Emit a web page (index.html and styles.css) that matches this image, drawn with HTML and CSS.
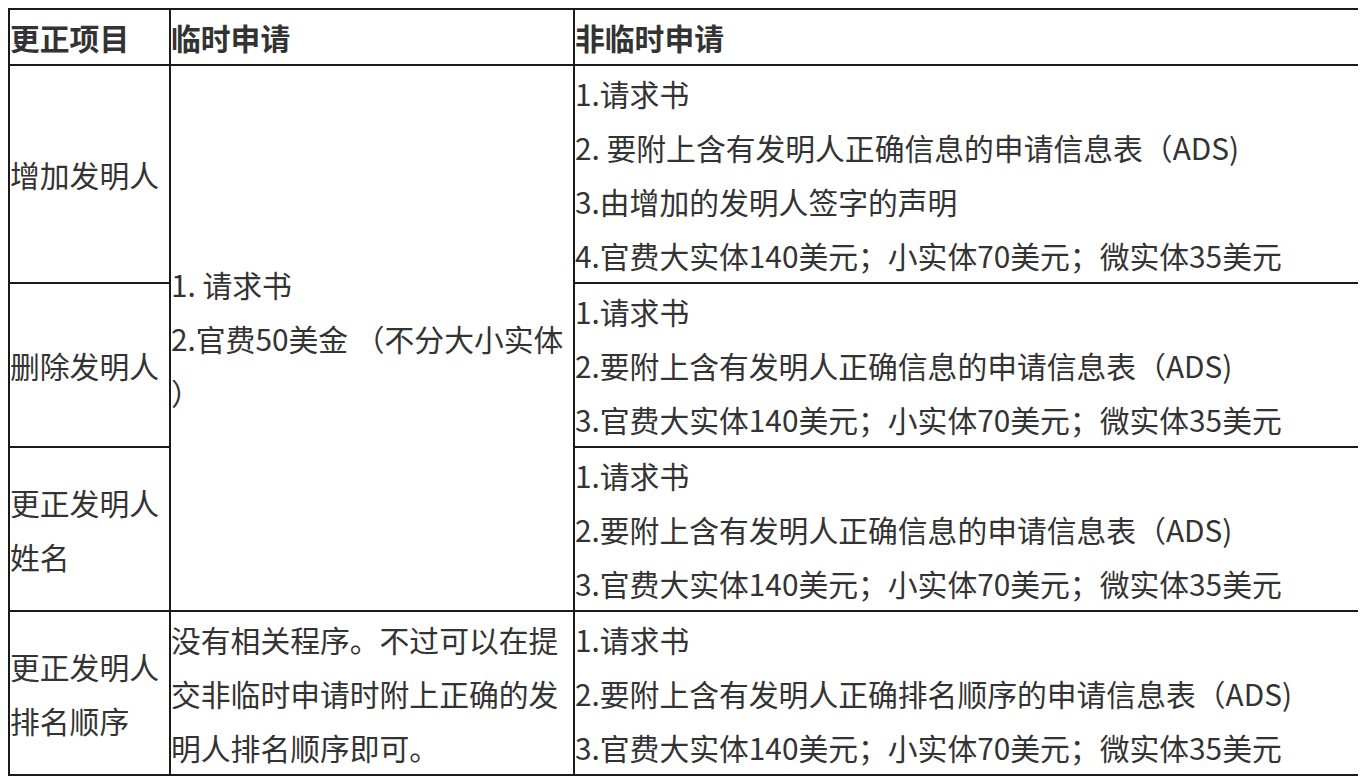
FILE: index.html
```html
<!DOCTYPE html>
<html lang="zh-CN">
<head>
<meta charset="utf-8">
<title>更正发明人</title>
<link rel="stylesheet" href="styles.css">
</head>
<body>
<table class="grid">
  <colgroup>
    <col class="c1">
    <col class="c2">
    <col class="c3">
  </colgroup>
  <tr>
    <th>更正项目</th>
    <th>临时申请</th>
    <th>非临时申请</th>
  </tr>
  <tr>
    <td>增加发明人</td>
    <td rowspan="3" class="loose"><p>1. 请求书</p><p>2.官费50美金 （不分大小实体）</p></td>
    <td><p>1.请求书</p><p>2. 要附上含有发明人正确信息的申请信息表（ADS)</p><p>3.由增加的发明人签字的声明</p><p>4.官费大实体140美元；小实体70美元；微实体35美元</p></td>
  </tr>
  <tr>
    <td>删除发明人</td>
    <td><p>1.请求书</p><p>2.要附上含有发明人正确信息的申请信息表（ADS)</p><p>3.官费大实体140美元；小实体70美元；微实体35美元</p></td>
  </tr>
  <tr>
    <td>更正发明人姓名</td>
    <td><p>1.请求书</p><p>2.要附上含有发明人正确信息的申请信息表（ADS)</p><p>3.官费大实体140美元；小实体70美元；微实体35美元</p></td>
  </tr>
  <tr>
    <td>更正发明人排名顺序</td>
    <td>没有相关程序。不过可以在提交非临时申请时附上正确的发明人排名顺序即可。</td>
    <td><p>1.请求书</p><p>2.要附上含有发明人正确排名顺序的申请信息表（ADS)</p><p>3.官费大实体140美元；小实体70美元；微实体35美元</p></td>
  </tr>
</table>
</body>
</html>
```
FILE: styles.css
```css
html, body {
  background: #ffffff;
}
body {
  margin: 8px;
  font-family: "Noto Sans CJK SC", "Noto Sans", sans-serif;
  font-size: 29.8px;
  color: #333333;
}
.grid {
  width: 1350px;
  border-collapse: collapse;
  table-layout: fixed;
}
.c1 { width: 161px; }
.c2 { width: 404px; }
.c3 { width: 785px; }
.grid th,
.grid td {
  border: 2px solid #1a1a1a;
  padding: 0;
  line-height: 54px;
  vertical-align: middle;
  text-align: left;
  word-break: break-all;
}
.grid th {
  font-weight: 700;
}
.grid td {
  font-weight: 400;
}
.grid .loose {
  line-break: anywhere;
}
.grid p {
  margin: 0;
}
```
